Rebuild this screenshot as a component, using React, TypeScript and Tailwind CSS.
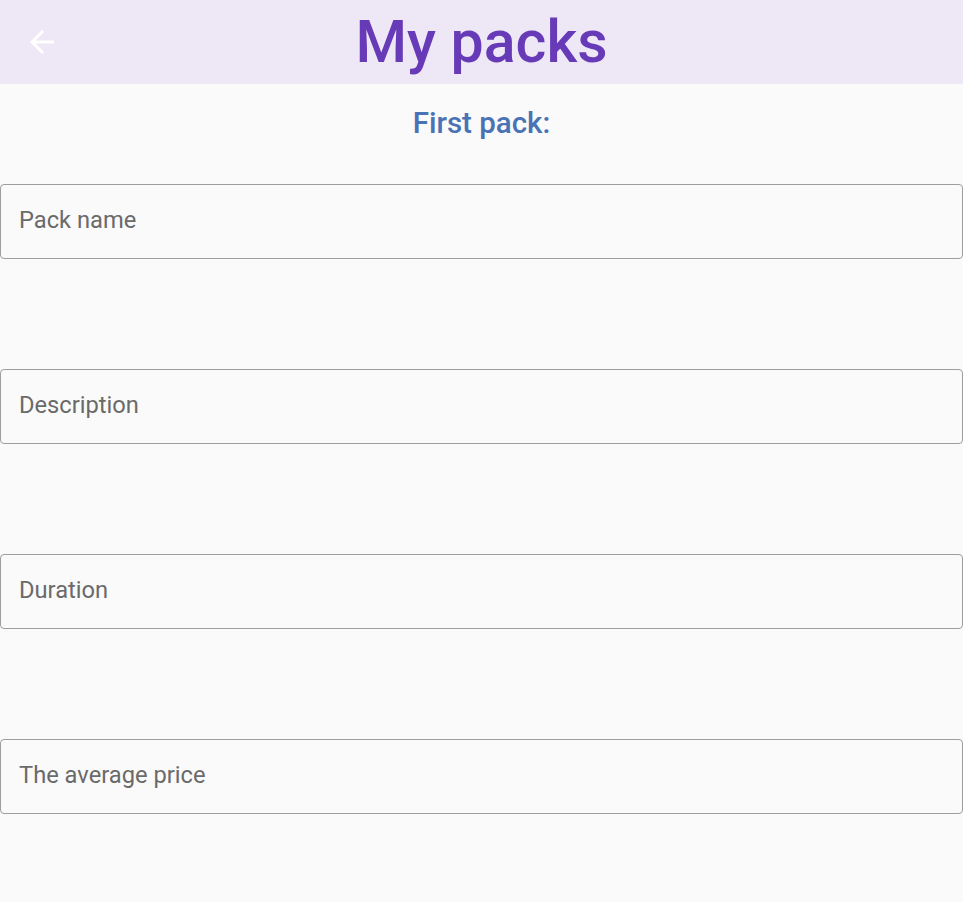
const fields = ['Pack name', 'Description', 'Duration', 'The average price'];

function BackArrow() {
  return (
    <svg width="36" height="36" viewBox="0 0 24 24" fill="#ffffff">
      <path d="M20 11H7.83l5.59-5.59L12 4l-8 8 8 8 1.41-1.41L7.83 13H20v-2z" />
    </svg>
  );
}

export default function App() {
  return (
    <div
      className="w-[963px] h-[902px] bg-[#fafafa] overflow-hidden"
      style={{ fontFamily: 'Roboto, "Noto Sans", sans-serif' }}
    >
      <header className="relative h-[84px] bg-[#ede7f6] flex items-center justify-center">
        <button className="absolute left-[24px] top-[24px] w-[36px] h-[36px]">
          <BackArrow />
        </button>
        <h1 className="text-[59px] leading-[70px] font-medium text-[#673ab7]">My packs</h1>
      </header>

      <h2 className="mt-[22px] text-center text-[29.5px] leading-[34px] font-medium text-[#4a72b4]">
        First pack:
      </h2>

      <div className="mt-[44px] flex flex-col gap-[110px]">
        {fields.map((f) => (
          <div
            key={f}
            className="h-[75px] w-[963px] border border-[#9e9e9e] rounded-[4px] flex items-center px-[18px] pb-[2px]"
          >
            <span className="text-[23.7px] text-[#6a6a6a]">{f}</span>
          </div>
        ))}
      </div>
    </div>
  );
}
